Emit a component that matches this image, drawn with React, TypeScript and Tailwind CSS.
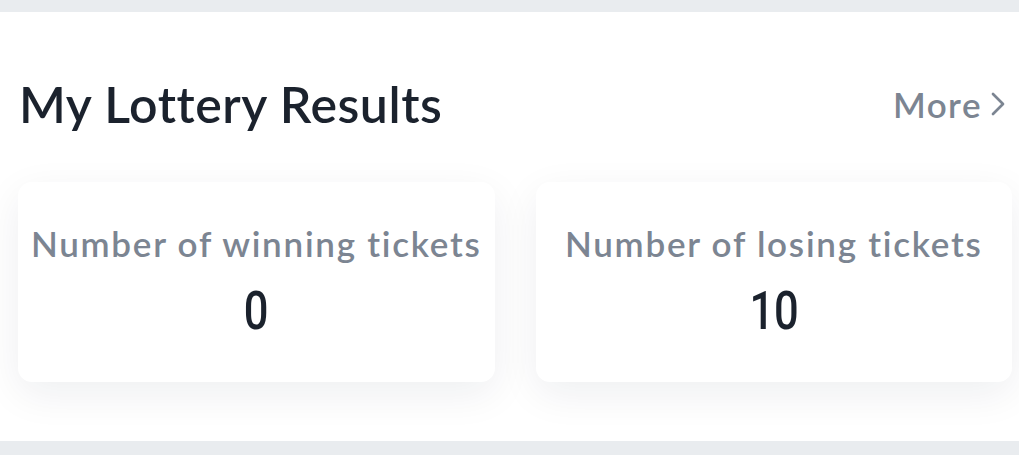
import { useState } from "react";

type Stat = { label: string; value: number };

const stats: Stat[] = [
  { label: "Number of winning tickets", value: 0 },
  { label: "Number of losing tickets", value: 10 },
];

function StatCard({ stat }: { stat: Stat }) {
  return (
    <div className="flex h-[200px] flex-col items-center justify-center rounded-[14px] bg-white shadow-[0_12px_40px_rgba(20,30,50,0.07)]">
      <div className="font-['Lato',sans-serif] text-[35px] leading-none font-semibold tracking-[1.75px] text-[#7c8592]">
        {stat.label}
      </div>
      <div className="mt-[24px] inline-block origin-center scale-x-[0.82] font-['Roboto',sans-serif] text-[53px] leading-none font-medium text-[#1b222d]">
        {stat.value}
      </div>
    </div>
  );
}

export default function App() {
  const [stat] = useState(stats);

  return (
    <div className="h-[455px] w-[1019px] overflow-hidden bg-white">
      <div className="h-[12px] bg-[#e9ecef]" aria-hidden />
      <div className="flex h-[429px] flex-col pr-[7px] pl-[18px]">
        <div className="mt-[67px] flex items-center justify-between pr-[7px]">
          <h1 className="pl-[1px] font-['Lato',sans-serif] text-[50px] leading-none font-semibold tracking-[0.55px] text-[#1b222d]">
            My Lottery Results
          </h1>
          <a
            href="#"
            className="flex items-center gap-[9px] font-['Lato',sans-serif] text-[35px] leading-none font-semibold tracking-[1.5px] text-[#7c8592]"
          >
            More
            <svg
              width="14"
              height="24"
              viewBox="0 0 14 24"
              fill="none"
              stroke="currentColor"
              strokeWidth="2.7"
              strokeLinecap="round"
              strokeLinejoin="round"
            >
              <polyline points="2,2 12,12 2,22" />
            </svg>
          </a>
        </div>
        <div className="mt-[53px] grid grid-cols-2 gap-[41px]">
          {stat.map((s) => (
            <StatCard key={s.label} stat={s} />
          ))}
        </div>
      </div>
      <div className="h-[14px] bg-[#e9ecef]" aria-hidden />
    </div>
  );
}
